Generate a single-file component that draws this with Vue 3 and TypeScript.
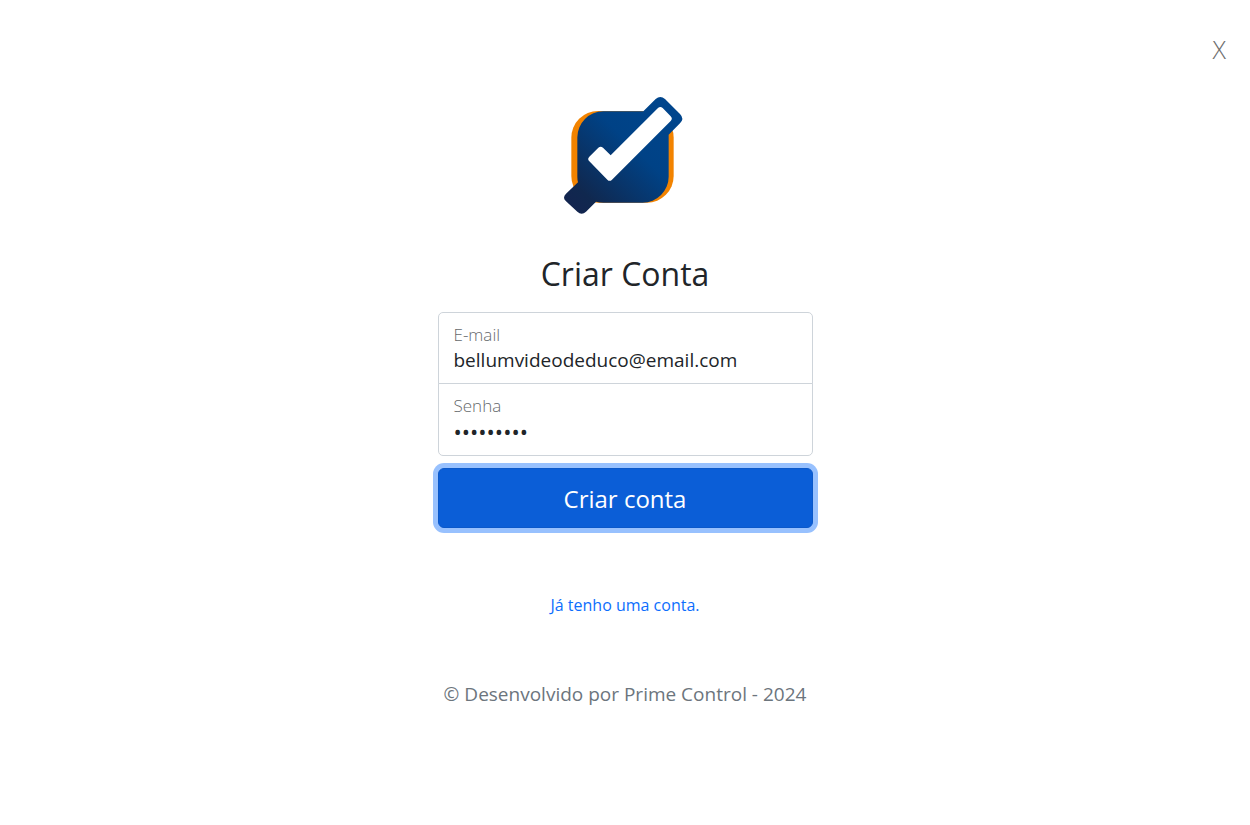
<script setup lang="ts">
import { ref } from 'vue'

const email = ref('bellumvideodeduco@email.com')
const password = ref('senha1234')
</script>

<template>
  <div class="page">
    <button class="close" type="button">X</button>
    <main class="signup">
      <svg class="logo" viewBox="0 0 450 420" role="img" aria-label="Prime Control">
        <defs>
          <linearGradient id="logo-blue" x1="80" y1="370" x2="360" y2="80" gradientUnits="userSpaceOnUse">
            <stop offset="0" stop-color="#12254f" />
            <stop offset="0.12" stop-color="#10284f" />
            <stop offset="0.62" stop-color="#004286" />
            <stop offset="1" stop-color="#00458c" />
          </linearGradient>
        </defs>
        <rect x="64" y="78" width="307" height="275" rx="80" fill="#f28300" />
        <path
          fill="url(#logo-blue)"
          d="M160 79H280L317 42Q331 30 345 42L390 87Q404 101 390 115L356 149V275A78 78 0 0 1 278 353H160Q148 353 138 350L108 380Q95 392 82 380L48 349Q36 338 48 326L84 292Q82 284 82 275V157A78 78 0 0 1 160 79Z"
        />
        <path
          fill="#fff"
          d="M118 215L145 188Q152 182 159 188L182 211L324 69Q331 63 338 69L362 94Q369 101 362 108L186 284Q179 291 172 284L118 229Q111 222 118 215Z"
        />
      </svg>
      <h1>Criar Conta</h1>
      <form @submit.prevent>
        <div class="field">
          <label for="email">E-mail</label>
          <input id="email" v-model="email" type="email" autocomplete="off" />
        </div>
        <div class="field">
          <label for="password">Senha</label>
          <input id="password" v-model="password" type="password" autocomplete="off" />
        </div>
        <button class="submit" type="submit">Criar conta</button>
      </form>
      <a class="login" href="#">Já tenho uma conta.</a>
      <p class="credit">© Desenvolvido por Prime Control - 2024</p>
    </main>
  </div>
</template>

<style>
body {
  margin: 0;
  background: #fff;
}
</style>

<style scoped>
.page {
  box-sizing: border-box;
  min-height: 100vh;
  padding: 31px 24px;
  display: flex;
  flex-direction: column;
  color: #212529;
  font-family: 'Segoe UI', 'Open Sans', 'Noto Sans', sans-serif;
  font-size: 19px;
}

.close {
  align-self: flex-end;
  padding: 0;
  border: 0;
  background: none;
  color: #6c6c6c;
  font-family: inherit;
  font-size: 25px;
  font-weight: 300;
  line-height: 36px;
}

.signup {
  width: 100%;
  max-width: 375px;
  margin: 18px auto 0;
  display: flex;
  flex-direction: column;
  align-items: center;
}

.logo {
  width: 150px;
  height: 140px;
}

h1 {
  margin: 28px 0 17px;
  font-size: 32px;
  font-weight: 400;
  line-height: 42px;
}

form {
  width: 100%;
}

.field {
  box-sizing: border-box;
  height: 72px;
  padding: 10px 15px;
  display: flex;
  flex-direction: column;
  border: 1px solid #ced4da;
  border-radius: 5px 5px 0 0;
}

.field + .field {
  height: 73px;
  margin-top: -1px;
  border-radius: 0 0 5px 5px;
}

label {
  color: #66696c;
  font-size: 17px;
  font-weight: 300;
  line-height: 24px;
}

input {
  width: 100%;
  height: 26px;
  padding: 0;
  border: 0;
  outline: 0;
  background: none;
  color: inherit;
  font-family: inherit;
  font-size: 19px;
}

input[type='password'] {
  font-size: 22px;
}

.submit {
  width: 100%;
  height: 60px;
  margin-top: 12px;
  padding: 0;
  border: 1px solid #0a58ca;
  border-radius: 6px;
  background: #0b5ed7;
  box-shadow: 0 0 0 5px #98c1fe;
  color: #fff;
  font-family: inherit;
  font-size: 24px;
}

.login {
  margin-top: 64px;
  color: #0d6efd;
  font-size: 16px;
  line-height: 26px;
  text-decoration: none;
}

.credit {
  margin: 61px 0 0;
  color: #6c757d;
  line-height: 30px;
  white-space: nowrap;
}
</style>
